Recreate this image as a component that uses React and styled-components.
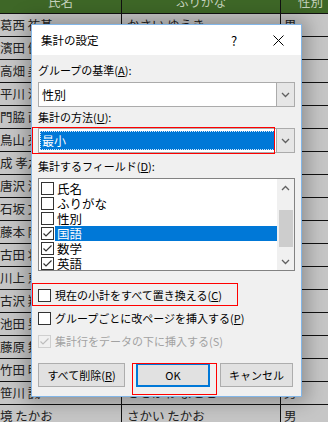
import styled, { createGlobalStyle } from "styled-components";

const GlobalStyle = createGlobalStyle`
  html, body {
    margin: 0;
    padding: 0;
  }
  body {
    width: 328px;
    height: 422px;
    overflow: hidden;
    background: #c6c6c6;
    font-family: "Noto Sans CJK JP", "Noto Sans", sans-serif;
  }
`;

const Screen = styled.div`
  position: relative;
  width: 328px;
  height: 422px;
  overflow: hidden;
  background: #c6c6c6;
`;

/* ---------- spreadsheet behind the dialog ---------- */

const Sheet = styled.div`
  margin-top: -9px;
`;

const Row = styled.div`
  display: grid;
  grid-template-columns: 122px 159px 60px;
  height: 23px;
  box-sizing: border-box;
  border-bottom: 1px solid #111;
  background: ${(p) => (p.$header ? "#3e6727" : "#c6c6c6")};
`;

const Cell = styled.div`
  border-right: 1px solid #111;
  padding-left: ${(p) => p.$pad}px;
  font-size: 12.5px;
  line-height: 22px;
  color: ${(p) => (p.$header ? "#c5d2bd" : "#222")};
  text-align: ${(p) => (p.$header ? "center" : "left")};
  white-space: nowrap;
  overflow: hidden;
`;

const rows = [
  ["葛西 祐基", "かさい ゆうき", "男"],
  ["濱田 健一", "はまだ けんいち", "男"],
  ["高畑 美穂", "たかはた みほ", "女"],
  ["平川 浩二", "ひらかわ こうじ", "男"],
  ["門脇 直子", "かどわき なおこ", "女"],
  ["鳥山 亮", "とりやま りょう", "男"],
  ["成 孝之", "なり たかゆき", "男"],
  ["唐沢 涼子", "からさわ りょうこ", "女"],
  ["石坂 文香", "いしざか ふみか", "女"],
  ["藤本 隆", "ふじもと たかし", "男"],
  ["古田 将太", "ふるた しょうた", "男"],
  ["川上 恵", "かわかみ めぐみ", "女"],
  ["古沢 翔", "ふるさわ しょう", "男"],
  ["池田 晃", "いけだ あきら", "男"],
  ["藤原 舞", "ふじわら まい", "女"],
  ["竹田 明", "たけだ あきら", "男"],
  ["笹川 誠", "ささがわ まこと", "男"],
  ["境 たかお", "さかい たかお", "男"],
];

/* ---------- dialog ---------- */

const Dialog = styled.div`
  position: absolute;
  left: 31px;
  top: 24px;
  width: 271px;
  height: 373px;
  box-sizing: border-box;
  border: 1px solid #82b6e8;
  background: #f0f0f0;
  box-shadow: 0 0 18px 5px rgba(0, 0, 0, 0.28);
  display: flex;
  flex-direction: column;
  color: #000;
`;

const TitleBar = styled.div`
  height: 30px;
  background: #fff;
  display: flex;
  align-items: center;
`;

const Title = styled.div`
  flex: 1;
  padding-left: 9px;
  font-size: 11.5px;
`;

const Help = styled.div`
  width: 16px;
  margin-right: 13px;
  text-align: center;
  font-size: 13px;
`;

const Close = styled.div`
  width: 46px;
  height: 30px;
  display: flex;
  align-items: center;
  justify-content: center;
`;

const Body = styled.div`
  flex: 1;
  padding: 0 6px;
  display: flex;
  flex-direction: column;
`;

const Label = styled.div`
  margin-top: ${(p) => p.$top}px;
  font-size: 11px;
  line-height: 14px;
  white-space: nowrap;
`;

const Key = styled.span`
  text-decoration: underline;
  text-underline-offset: 1px;
`;

const Select = styled.div`
  margin-top: ${(p) => p.$top}px;
  height: 25px;
  box-sizing: border-box;
  border: 1px solid #ababab;
  background: #fff;
  display: flex;
`;

const SelectValue = styled.div`
  flex: 1;
  padding: 2px 1px 2px 1px;
  display: flex;
`;

const ValueText = styled.div`
  flex: 1;
  padding-left: 2px;
  font-size: 12px;
  line-height: 19px;
  color: ${(p) => (p.$selected ? "#fff" : "#000")};
  background: ${(p) => (p.$selected ? "#0078d7" : "transparent")};
  outline: ${(p) => (p.$selected ? "1px dotted #d8e8f8" : "none")};
  outline-offset: -1px;
`;

const DropButton = styled.div`
  width: 17px;
  margin: -1px -1px -1px 0;
  border: 1px solid #ababab;
  background: #e6e6e6;
  display: flex;
  align-items: center;
  justify-content: center;
`;

const ListBox = styled.div`
  margin-top: 5px;
  height: 93px;
  box-sizing: border-box;
  border: 1px solid #828282;
  background: #fff;
  display: flex;
`;

const Items = styled.div`
  flex: 1;
  padding: 2px 0 0 2px;
  overflow: hidden;
`;

const Item = styled.div`
  height: 15px;
  display: flex;
  align-items: center;
`;

const ItemText = styled.div`
  flex: 1;
  margin-left: 1px;
  padding-left: 2px;
  height: 15px;
  font-size: 12.5px;
  line-height: 15px;
  color: ${(p) => (p.$selected ? "#fff" : "#000")};
  background: ${(p) => (p.$selected ? "#0078d7" : "transparent")};
`;

const ScrollBar = styled.div`
  width: 17px;
  background: #f0f0f0;
  display: flex;
  flex-direction: column;
  align-items: center;
`;

const ScrollArrow = styled.div`
  height: 17px;
  width: 17px;
  display: flex;
  align-items: center;
  justify-content: center;
`;

const Track = styled.div`
  flex: 1;
  width: 100%;
`;

const Thumb = styled.div`
  margin: 14px 1px 0 2px;
  height: 37px;
  background: #cdcdcd;
`;

const Box = styled.div`
  width: 13px;
  height: 13px;
  box-sizing: border-box;
  flex: none;
  border: 1px solid ${(p) => (p.$disabled ? "#cfcfcf" : "#333")};
  background: ${(p) => (p.$disabled ? "#f0f0f0" : "#fff")};
  display: flex;
  align-items: center;
  justify-content: center;
`;

const CheckRow = styled.div`
  margin-top: ${(p) => p.$top}px;
  height: 22px;
  display: flex;
  align-items: center;
  gap: 4px;
  font-size: 11px;
  white-space: nowrap;
  color: ${(p) => (p.$disabled ? "#a2a2a2" : "#000")};
`;

const Buttons = styled.div`
  margin-top: 11px;
  display: flex;
`;

const Button = styled.div`
  width: ${(p) => p.$w}px;
  margin-left: ${(p) => p.$gap}px;
  height: 24px;
  box-sizing: border-box;
  border: ${(p) => (p.$default ? "2px solid #0078d7" : "1px solid #adadad")};
  background: #e1e1e1;
  display: flex;
  align-items: center;
  justify-content: center;
  font-size: 11px;
  white-space: nowrap;
`;

/* red annotation frames drawn over the dialog */
const Mark = styled.div`
  position: absolute;
  left: ${(p) => p.$x}px;
  top: ${(p) => p.$y}px;
  width: ${(p) => p.$w}px;
  height: ${(p) => p.$h}px;
  box-sizing: border-box;
  border: 1px solid #f00;
  pointer-events: none;
`;

const Chevron = ({ up }) => (
  <svg width="9" height="6" viewBox="0 0 9 6">
    <polyline
      points={up ? "1,5 4.5,1.5 8,5" : "1,1 4.5,4.5 8,1"}
      fill="none"
      stroke={up ? "#606060" : "#606060"}
      strokeWidth="1.3"
    />
  </svg>
);

const Check = ({ color = "#333" }) => (
  <svg width="11" height="11" viewBox="0 0 11 11">
    <polyline points="1.5,5.5 4,8 9.5,2.5" fill="none" stroke={color} strokeWidth="1.2" />
  </svg>
);

const fields = [
  { name: "氏名", checked: false },
  { name: "ふりがな", checked: false },
  { name: "性別", checked: false },
  { name: "国語", checked: true, selected: true },
  { name: "数学", checked: true },
  { name: "英語", checked: true },
];

export default function App() {
  return (
    <Screen>
      <GlobalStyle />
      <Sheet>
        <Row $header>
          <Cell $header $pad={0}>氏名</Cell>
          <Cell $header $pad={0}>ふりがな</Cell>
          <Cell $header $pad={0}>性別</Cell>
        </Row>
        {rows.map((r, i) => (
          <Row key={i}>
            <Cell $pad={0}>{r[0]}</Cell>
            <Cell $pad={5}>{r[1]}</Cell>
            <Cell $pad={3}>{r[2]}</Cell>
          </Row>
        ))}
      </Sheet>

      <Dialog>
        <TitleBar>
          <Title>集計の設定</Title>
          <Help>?</Help>
          <Close>
            <svg width="11" height="11" viewBox="0 0 11 11">
              <path d="M0.5 0.5 L10.5 10.5 M10.5 0.5 L0.5 10.5" stroke="#000" strokeWidth="1" />
            </svg>
          </Close>
        </TitleBar>
        <Body>
          <Label $top={8}>
            グループの基準(<Key>A</Key>):
          </Label>
          <Select $top={5}>
            <SelectValue>
              <ValueText>性別</ValueText>
            </SelectValue>
            <DropButton>
              <Chevron />
            </DropButton>
          </Select>

          <Label $top={3}>
            集計の方法(<Key>U</Key>):
          </Label>
          <Select $top={4}>
            <SelectValue>
              <ValueText $selected>最小</ValueText>
            </SelectValue>
            <DropButton>
              <Chevron />
            </DropButton>
          </Select>

          <Label $top={6}>
            集計するフィールド(<Key>D</Key>):
          </Label>
          <ListBox>
            <Items>
              {fields.map((f) => (
                <Item key={f.name}>
                  <Box>{f.checked && <Check />}</Box>
                  <ItemText $selected={f.selected}>{f.name}</ItemText>
                </Item>
              ))}
            </Items>
            <ScrollBar>
              <ScrollArrow>
                <Chevron up />
              </ScrollArrow>
              <Track>
                <Thumb />
              </Track>
              <ScrollArrow>
                <Chevron />
              </ScrollArrow>
            </ScrollBar>
          </ListBox>

          <CheckRow $top={13}>
            <Box />
            <span>
              現在の小計をすべて置き換える(<Key>C</Key>)
            </span>
          </CheckRow>
          <CheckRow $top={1}>
            <Box />
            <span>
              グループごとに改ページを挿入する(<Key>P</Key>)
            </span>
          </CheckRow>
          <CheckRow $top={1} $disabled>
            <Box $disabled>
              <Check color="#bdbdbd" />
            </Box>
            <span>集計行をデータの下に挿入する(S)</span>
          </CheckRow>

          <Buttons>
            <Button $w={87} $gap={0}>
              すべて削除(<Key>R</Key>)
            </Button>
            <Button $w={74} $gap={11} $default>
              OK
            </Button>
            <Button $w={73} $gap={10}>
              キャンセル
            </Button>
          </Buttons>
        </Body>
      </Dialog>

      <Mark $x={32} $y={127} $w={243} $h={27} />
      <Mark $x={32} $y={283} $w={206} $h={23} />
      <Mark $x={132} $y={363} $w={85} $h={32} />
    </Screen>
  );
}
